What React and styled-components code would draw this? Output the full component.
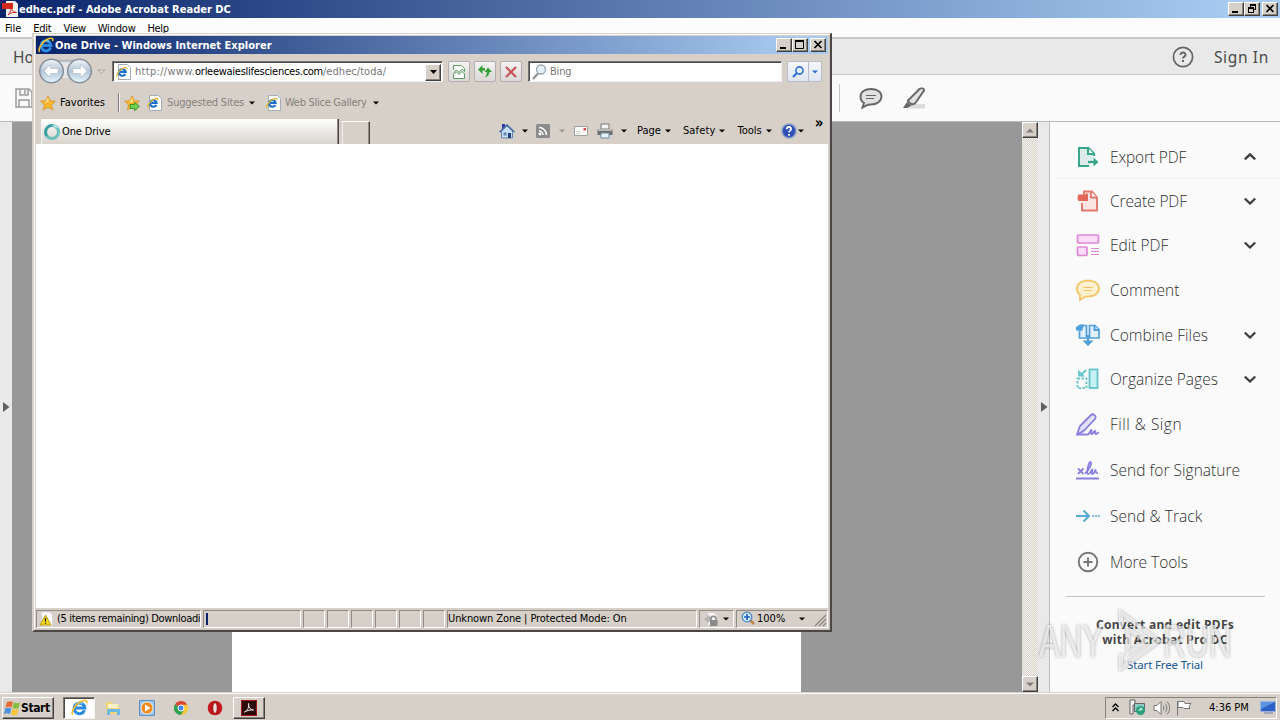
import React from "react";
import styled, { createGlobalStyle, css } from "styled-components";

const GlobalStyle = createGlobalStyle`
  * {
    box-sizing: border-box;
  }
  body {
    margin: 0;
    overflow: hidden;
    background-color: #989898;
    font-family: "DejaVu Sans Condensed", "DejaVu Sans", sans-serif;
    font-size: 11px;
    color: #000;
  }
  svg {
    display: block;
    flex: none;
  }
`;

const Desktop = styled.div`
  position: relative;
  width: 1280px;
  height: 720px;
  display: flex;
  flex-direction: column;
  overflow: hidden;
`;

const Label = styled.span`
  flex: none;
  white-space: nowrap;
  line-height: 14px;
  font-size: ${(p) => p.$size || 11}px;
  font-weight: ${(p) => (p.$bold ? 700 : 400)};
  color: ${(p) => p.$color || "#000"};
  letter-spacing: ${(p) => p.$ls || 0}px;
  margin-left: ${(p) => p.$ml || 0}px;
`;

const Slot = styled.span`
  display: flex;
  flex: none;
  margin-left: ${(p) => p.$ml || 0}px;
`;

const raised = css`
  background-color: #d6d0c8;
  border: 1px solid;
  border-color: #fff #404040 #404040 #fff;
  box-shadow: inset -1px -1px 0 #86827c;
`;

const sunken = css`
  background-color: #fff;
  border: 1px solid;
  border-color: #77736f #f4f2ee #f4f2ee #77736f;
  box-shadow: inset 1px 1px 0 #4c4a48;
`;

/* ---------- shared window parts ---------- */

const TitleBar = styled.div`
  display: flex;
  align-items: center;
  flex: none;
  height: 18px;
  padding: 0 2px;
  background: linear-gradient(90deg, #0a246a, #a6caf0 96%);

  ${Label} {
    padding-top: 1px;
  }
`;

const WinButton = styled.button`
  ${raised}
  width: 16px;
  height: 14px;
  padding: 0;
  flex: none;
  display: flex;
  align-items: center;
  justify-content: center;
  margin-left: ${(p) => p.$ml || 0}px;
`;

const Spacer = styled.div`
  flex: 1;
`;

const WinButtons = ({ restore }) => (
  <>
    <WinButton>
      <svg width="12" height="10">
        <path d="M2 7h6v2h-6z" />
      </svg>
    </WinButton>
    <WinButton>
      {restore ? (
        <svg width="12" height="10" fill="none" stroke="#000" shapeRendering="crispEdges">
          <path d="M4.500 3V.5h5v5H8M4 1.500h6M2.500 3.500h5v5h-5zM2 4.500h6" />
        </svg>
      ) : (
        <svg width="12" height="10" fill="none" stroke="#000" shapeRendering="crispEdges">
          <path d="M1.500.5h8v8h-8zM1 1.500h9" />
        </svg>
      )}
    </WinButton>
    <WinButton $ml={2}>
      <svg width="12" height="10" stroke="#000" strokeWidth="1.700">
        <path d="M2.500 1l7 7M9.500 1l-7 7" />
      </svg>
    </WinButton>
  </>
);

const Caret = ({ ml = 0, color = "#000" }) => (
  <Slot $ml={ml}>
    <svg width="6" height="4" fill={color}>
      <path d="M0 .5h6L3 3.500z" />
    </svg>
  </Slot>
);

const IeGlyph = ({ size = 16 }) => (
  <svg width={size} height={size} viewBox="0 0 16 16" fill="none">
    <path d="M12.700 10.600A5 5 0 1 1 13 8.500H4.500" stroke="#2a8be0" strokeWidth="2.900" />
    <path d="M3.500 6.500A5 5 0 0 1 11 4.500" stroke="#7cc8f6" strokeWidth="1.200" />
    <path d="M1.800 14.800C-.8 12.500 5 3.500 11 1.600c3-1 4.500 0 3.600 2.400" stroke="#f2bd2c" strokeWidth="1.600" />
  </svg>
);

const IePage = () => (
  <svg width="16" height="16" viewBox="0 0 16 16" fill="none">
    <path d="M2.500.5h9l3 3v12h-12z" fill="#fff" stroke="#a4adb8" />
    <path d="M9.300 9.900A3.300 3.300 0 1 1 9.600 8H4.300" stroke="#1b6fc9" strokeWidth="2.200" />
    <path d="M1.300 12.500C-.2 10.500 4 5 8.500 3.600c2-.5 2.600.2 2.300 1.500" stroke="#e5b62c" strokeWidth="1.300" />
  </svg>
);

/* ---------- Acrobat ---------- */

const AcroMenu = styled.div`
  display: flex;
  align-items: center;
  gap: 12px;
  height: 21px;
  flex: none;
  background-color: #fdfcfc;
  border-bottom: 2px solid #c9c9c9;
  padding: 2px 0 0 5px;
`;

const AcroTabs = styled.div`
  display: flex;
  align-items: center;
  height: 36px;
  flex: none;
  background-color: #e9e9e9;
  border-bottom: 1px solid #c6c6c6;
  padding: 0 11px 0 13px;
`;

const AcroText = styled.span`
  font-family: "Noto Sans", "Open Sans", sans-serif;
  font-size: 15.500px;
  color: #4a4a4a;
  line-height: 20px;
  letter-spacing: ${(p) => p.$ls || 0}px;
  margin-left: ${(p) => p.$ml || 0}px;
`;

const AcroTools = styled.div`
  display: flex;
  align-items: center;
  height: 47px;
  flex: none;
  background-color: #fafafa;
  border-bottom: 1px solid #b9b9b9;
  padding-left: 15px;
`;

const ToolDivider = styled.div`
  width: 1px;
  height: 28px;
  background-color: #c6c6c6;
  margin-left: 806px;
`;

const AcroBody = styled.div`
  display: flex;
  flex: 1;
  min-height: 0;
`;

const Gutter = styled.div`
  display: flex;
  align-items: center;
  flex: none;
  width: ${(p) => p.$w}px;
  padding-left: ${(p) => p.$pl}px;
  background-color: #e9e9e9;
`;

const DocArea = styled.div`
  flex: 1;
  display: flex;
  padding-left: 220px;
  background-color: #989898;
`;

const DocPage = styled.div`
  width: 569px;
  background-color: #fff;
`;

const ScrollTrack = styled.div`
  width: 16px;
  flex: none;
  display: flex;
  flex-direction: column;
  justify-content: space-between;
  background: repeating-conic-gradient(#d6d0c8 0% 25%, #f6f4f1 0% 50%) 0 0 / 2px 2px;
`;

const ScrollButton = styled.button`
  ${raised}
  width: 16px;
  height: 16px;
  padding: 0;
  display: flex;
  align-items: center;
  justify-content: center;
`;

const ToolsPanel = styled.div`
  width: 231px;
  flex: none;
  display: flex;
  flex-direction: column;
  background-color: #fafafa;
  border-left: 1px solid #bdbdbd;
  padding-top: 14px;
`;

const ToolRow = styled.div`
  display: flex;
  align-items: center;
  flex: none;
  height: ${(p) => p.$h}px;
  margin-left: 6px;
  padding: 0 24px 0 20px;
  border-bottom: ${(p) => (p.$line ? "1px solid #f0f0f0" : "none")};
`;

const ToolName = styled.span`
  flex: 1;
  margin-left: 10px;
  font-family: "Open Sans", "Noto Sans", sans-serif;
  font-weight: 300;
  font-size: 15.500px;
  white-space: nowrap;
  color: #303030;
  letter-spacing: ${(p) => p.$ls || 0}px;
`;

const PanelRule = styled.div`
  height: 1px;
  margin: 11px 15px 0 16px;
  flex: none;
  background-color: #c3c3c3;
`;

const Promo = styled.div`
  display: flex;
  flex-direction: column;
  align-items: center;
  margin-top: 20px;
  font-family: "Noto Sans", sans-serif;
  font-weight: 700;
  font-size: 12px;
  line-height: 15px;
  letter-spacing: 0.3px;
  color: #474747;
`;

const PromoLink = styled.a`
  margin-top: 10px;
  font-weight: 400;
  font-size: 11.500px;
  letter-spacing: -0.15px;
  color: #1b5893;
`;

const toolIcons = {
  export: (
    <svg width="24" height="24" fill="none" stroke="#35a88c" strokeWidth="2">
      <path d="M18 11V8.500L12.500 3H3v18h10" fill="#dcebe8" />
      <path d="M12 3v6h6" fill="#fff" />
      <path d="M12 17h7" strokeWidth="2.300" />
      <path d="M17.500 12.500l5 4.500-5 4.500z" fill="#35a88c" stroke="none" />
    </svg>
  ),
  create: (
    <svg width="24" height="24" fill="none" stroke="#e2786d" strokeWidth="1.900">
      <path d="M6 14v7.500h15V8.500l-5-6H8V6" fill="#fbe6e3" />
      <path d="M15 2.500v6h6" fill="#fff" />
      <path d="M3 5.500h7V4l2 1v7h-9c-2 0-2-6.500 0-6.500z" fill="#e2685b" stroke="none" />
    </svg>
  ),
  edit: (
    <svg width="24" height="24" fill="#f9dcf7" stroke="#df86d8" strokeWidth="1.700">
      <rect x="1.500" y="2" width="21" height="8" rx="1" />
      <rect x="1.500" y="14" width="9.500" height="8.500" rx="1" />
      <path d="M15 15.500h8M15 18.500h8M15 21.500h8" strokeWidth="1" />
    </svg>
  ),
  comment: (
    <svg width="24" height="24" fill="#fdf0cf" stroke="#f2c76b" strokeWidth="1.900">
      <path d="M12 2.500c6.500 0 11 3.500 11 8s-4.500 8-11 8l-3 .2L4 22v-5C2 15.500 1 13.500 1 10.500c0-4.500 4.500-8 11-8z" />
      <path d="M7 9.500h10M8 12.500h8" strokeWidth="1" />
    </svg>
  ),
  combine: (
    <svg width="24" height="24" fill="#e3f0fa" stroke="#4f9fdc" strokeWidth="1.700">
      <path d="M5 2.500h5.500V15H3.500V8" />
      <path d="M13.500 15V2.500h5.500l4 4V15z" />
      <path d="M18.500 2.500V7H23M12 12v8" strokeWidth="2" />
      <path d="M6.500 17.500h11L12 23z" fill="#4f9fdc" stroke="none" />
      <path d="M0 7.500V4l4-2.500h4L6 8z" fill="#4f9fdc" stroke="none" />
    </svg>
  ),
  organize: (
    <svg width="24" height="24" fill="none" stroke="#6ac5cc" strokeWidth="1.900">
      <rect x="13.500" y="2.500" width="8" height="18.500" fill="#c6f1f5" />
      <path d="M1.500 11.500h9v9.500h-9z" strokeDasharray="2.500 1.500" />
      <path d="M10 3L5 8" />
      <path d="M2 2.500v7h7z" fill="#6ac5cc" stroke="none" />
    </svg>
  ),
  fill: (
    <svg width="24" height="24" fill="none" stroke="#8a7fe0" strokeWidth="1.800">
      <path d="M1 22.500L4 14 15 3c2-2 6 1 4 4L9 17.500c-2 2-4 3.500-8 5z" fill="#e4e1fa" />
      <path d="M1 22.500h11c2.500-1.500 2.500-5 3.500-4.500s-1.500 4.500.5 4 2-3 3-3-.5 3 1 3l3-1.500" />
    </svg>
  ),
  signature: (
    <svg width="24" height="24" fill="none" stroke="#8a7fe0" strokeWidth="1.800">
      <path d="M0 20.500h23M2 10.500l5.500 5.500M7.500 10.500L2 16" />
      <path d="M9 15.500c4-3 7.500-11 5.500-11.500S10 15.500 12 16s4-5.500 4.500-4.500-2 4.500 0 4.500 2.500-4 3-4-.5 3.500 2.500 3" />
    </svg>
  ),
  track: (
    <svg width="24" height="24" fill="none" stroke="#56a8d6" strokeWidth="2">
      <path d="M0 12h13M7.500 6.500L13 12l-5.500 5.500" />
      <path d="M16 12h8" strokeDasharray="2 1" strokeWidth="1.300" />
    </svg>
  ),
  more: (
    <svg width="24" height="24" fill="none" stroke="#757575" strokeWidth="1.900">
      <circle cx="12" cy="12" r="9.300" />
      <path d="M12 7.500v9M7.500 12h9" />
    </svg>
  ),
};

const tools = [
  { icon: "export", name: "Export PDF", h: 43, ls: -0.15, chevron: "up", line: true },
  { icon: "create", name: "Create PDF", h: 44, ls: -0.1, chevron: "down" },
  { icon: "edit", name: "Edit PDF", h: 44, ls: 0, chevron: "down" },
  { icon: "comment", name: "Comment", h: 45, ls: 0.1 },
  { icon: "combine", name: "Combine Files", h: 45, ls: 0.05, chevron: "down" },
  { icon: "organize", name: "Organize Pages", h: 44, ls: 0.03, chevron: "down" },
  { icon: "fill", name: "Fill & Sign", h: 46, ls: 0.5 },
  { icon: "signature", name: "Send for Signature", h: 46, ls: 0.04 },
  { icon: "track", name: "Send & Track", h: 46, ls: 0.05 },
  { icon: "more", name: "More Tools", h: 46, ls: 0 },
];

const Chevron = ({ dir }) => (
  <svg width="12" height="8" fill="none" stroke="#3e3e3e" strokeWidth="2.300">
    <path d={dir === "up" ? "M.8 6.300L6 1.300l5.200 5" : "M.8 1.500L6 6.500l5.200-5"} />
  </svg>
);

const AcrobatWindow = () => (
  <>
    <TitleBar>
      <svg width="17" height="18">
        <path d="M4 1h9l3 3v13H4z" fill="#f4f1f1" />
        <path d="M0 3h11v6H0z" fill="#d3261c" />
        <path d="M6 15c2-2 3.500-5 3-8 1 4 3 5 5.500 5.500C11 12 8 13 6 15z" fill="none" stroke="#d3261c" />
      </svg>
      <Label $bold $color="#fff" $ls={0.02}>edhec.pdf - Adobe Acrobat Reader DC</Label>
      <Spacer />
      <WinButtons restore />
    </TitleBar>
    <AcroMenu>
      <Label $ls={-0.05}>File</Label>
      <Label $ls={-0.25}>Edit</Label>
      <Label $ls={-0.3}>View</Label>
      <Label $ls={-0.2}>Window</Label>
      <Label $ls={-0.4}>Help</Label>
    </AcroMenu>
    <AcroTabs>
      <AcroText>Home</AcroText>
      <Spacer />
      <svg width="22" height="22" fill="none" stroke="#666" strokeWidth="1.700">
        <circle cx="11" cy="11" r="9.600" />
        <path d="M8.500 9c0-3.500 5.200-3.300 5 0 0 1.500-2.500 1.700-2.500 3.500M11 14v2" strokeWidth="2" />
      </svg>
      <AcroText $ml={20} $ls={0.65}>Sign In</AcroText>
    </AcroTabs>
    <AcroTools>
      <svg width="18" height="20" fill="none" stroke="#9c9c9c" strokeWidth="1.500">
        <path d="M1 1h13l3 3v15H1zM5 1v6h8V1M4 19v-7h10v7M10 2v4" />
      </svg>
      <ToolDivider />
      <Slot $ml={19}>
        <svg width="24" height="24" fill="#e2e2e2" stroke="#666" strokeWidth="1.900">
          <path d="M12 3c6 0 10.500 3 10.500 7.500s-4.500 8-10.500 8l-3 .2-5.500 2.800 1.500-4.500C2.500 15.500 1.500 13.500 1.500 10.500 1.500 6 6 3 12 3z" />
          <path d="M7 9.500h10M7 12.500h8" strokeWidth="1.200" />
        </svg>
      </Slot>
      <Slot $ml={19}>
        <svg width="24" height="24" fill="#e2e2e2" stroke="#666" strokeWidth="1.900">
          <path d="M8 18h15v4.500H4z" stroke="none" fill="#dcdcdc" />
          <path d="M6 14.500L17.500 3c1-1 5-1 4.500 1.500L13 17.500l-3 1-4-3z" />
          <path d="M5 16l4.500 3.500L5 22H1z" fill="#666" stroke="none" />
        </svg>
      </Slot>
    </AcroTools>
    <AcroBody>
      <Gutter $w={12} $pl={3}>
        <svg width="7" height="11" fill="#606060">
          <path d="M0 0l6.500 5L0 10z" />
        </svg>
      </Gutter>
      <DocArea>
        <DocPage />
      </DocArea>
      <ScrollTrack>
        <ScrollButton>
          <svg width="8" height="5" fill="#808080">
            <path d="M0 4.500h8L4 .5z" />
          </svg>
        </ScrollButton>
        <ScrollButton>
          <svg width="8" height="5" fill="#808080">
            <path d="M0 .5h8L4 4.500z" />
          </svg>
        </ScrollButton>
      </ScrollTrack>
      <Gutter $w={11} $pl={3}>
        <svg width="7" height="11" fill="#606060">
          <path d="M0 0l6.500 5L0 10z" />
        </svg>
      </Gutter>
      <ToolsPanel>
        {tools.map((t) => (
          <ToolRow key={t.icon} $h={t.h} $line={t.line}>
            {toolIcons[t.icon]}
            <ToolName $ls={t.ls}>{t.name}</ToolName>
            {t.chevron && <Chevron dir={t.chevron} />}
          </ToolRow>
        ))}
        <PanelRule />
        <Promo>
          <span>Convert and edit PDFs</span>
          <span>with Acrobat Pro DC</span>
          <PromoLink>Start Free Trial</PromoLink>
        </Promo>
      </ToolsPanel>
    </AcroBody>
  </>
);

/* ---------- Internet Explorer ---------- */

const IeFrame = styled.div`
  position: absolute;
  left: 32px;
  top: 33px;
  width: 800px;
  height: 599px;
  display: flex;
  flex-direction: column;
  padding: 2px;
  background-color: #d6d0c8;
  border: 2px solid;
  border-color: #d6d0c8 #4a4744 #4a4744 #d6d0c8;
  border-top-width: 1px;
  box-shadow: inset 1px 1px 0 #fff, inset -1px -1px 0 #c9c4bc;
`;

const NavRow = styled.div`
  display: flex;
  align-items: center;
  height: 35px;
  flex: none;
  padding-left: 2px;
`;

const AddressBox = styled.div`
  ${sunken}
  display: flex;
  align-items: center;
  width: ${(p) => p.$w}px;
  height: 21px;
  flex: none;
  margin-left: ${(p) => p.$ml}px;
  padding: 1px 1px 0 3px;
`;

const DropButton = styled.button`
  ${raised}
  width: 16px;
  height: 17px;
  padding: 0 4px;
`;

const NavButton = styled.button`
  display: flex;
  align-items: center;
  justify-content: center;
  flex: none;
  width: 22px;
  height: 21px;
  padding: 0;
  margin-left: ${(p) => p.$ml}px;
  border: 1px solid #b1aeab;
  border-radius: 2px;
  background: linear-gradient(#f6f5f4, #e6e4e2 50%, #dcdad8);
`;

const SearchButtons = styled.div`
  display: flex;
  align-items: center;
  flex: none;
  width: 35px;
  height: 21px;
  margin-left: 5px;
  border: 1px solid #b9bcc4;
  border-radius: 2px;
  background: linear-gradient(#f5f7fb, #dfe6f2);
`;

const SearchMore = styled.div`
  display: flex;
  align-items: center;
  justify-content: center;
  width: 13px;
  height: 19px;
  margin-left: 4px;
  border-left: 1px solid #b9bcc4;
`;

const FavRow = styled.div`
  display: flex;
  align-items: center;
  height: 28px;
  flex: none;
  padding-left: 4px;
`;

const FavDivider = styled.div`
  width: 2px;
  height: 19px;
  margin: -2px 0 0 13px;
  border-left: 1px solid #807c77;
  border-right: 1px solid #f6f4f2;
`;

const TabRow = styled.div`
  display: flex;
  align-items: flex-end;
  height: 27px;
  flex: none;
  padding-left: 5px;
`;

const Tab = styled.div`
  display: flex;
  align-items: center;
  width: 298px;
  height: 25px;
  padding: 1px 0 0 2px;
  background: linear-gradient(#fff, #f3f2ef 30%, #d8d3cc);
  border-right: 1px solid #48443f;
  box-shadow: inset -1px 0 0 #8e8a84, inset 1px 0 0 #f5f4f2;
`;

const NewTab = styled.div`
  width: 28px;
  height: 23px;
  margin-left: 3px;
  border: 1px solid;
  border-width: 1px 1px 0;
  border-color: #fff #48443f #fff #f0eeeb;
  box-shadow: inset -1px 0 0 #8e8a84;
`;

const CommandBar = styled.div`
  display: flex;
  align-items: center;
  height: 27px;
  margin-left: 129px;
`;

const Overflow = styled.span`
  align-self: flex-start;
  margin: -2px 0 0 11px;
  font-size: 15px;
  font-weight: 700;
  line-height: 17px;
`;

const Viewport = styled.div`
  flex: 1;
  background-color: #fff;
`;

const StatusBar = styled.div`
  display: flex;
  align-items: center;
  height: 20px;
  flex: none;
  gap: 2px;
  padding-top: 1px;
`;

const StatusPane = styled.div`
  display: flex;
  align-items: center;
  overflow: hidden;
  flex: none;
  width: ${(p) => p.$w}px;
  height: 18px;
  padding-left: ${(p) => p.$pl || 0}px;
  border: 1px solid;
  border-color: #8f8b85 #fff #fff #8f8b85;

  ${Label} {
    padding-top: 1px;
  }
`;

const Progress = styled.div`
  width: 2px;
  height: 12px;
  background-color: #0a246a;
`;

const RoundArrow = ({ flip }) => (
  <g transform={flip ? "translate(55 0) scale(-1 1)" : undefined}>
    <circle cx="13.500" cy="13" r="11.800" fill="url(#nav)" stroke="#858f9b" strokeWidth="1.500" />
    <path d="M12.500 6.500L6 13l6.500 6.500V15.500H20v-5h-7.500z" fill="#fff" stroke="#b5c3d1" strokeWidth=".7" />
  </g>
);

const Star = ({ plus }) => (
  <svg width="16" height="16" viewBox="0 0 16 16">
    <path d="M8 .8l2.200 4.900 5.200.5-3.900 3.500 1.100 5.300L8 12.300 3.400 15l1.100-5.300L.6 6.200l5.200-.5z" fill="#f9b52c" stroke="#d9932a" strokeWidth=".8" />
    <path d="M8 2.500l1.200 4L5 8z" fill="#fde08a" />
    {plus && <path d="M6 9.500h4.500V7.300l5 4.200-5 4.200v-2.200H6z" fill="#6fd04b" stroke="#2f8a25" strokeWidth=".8" />}
  </svg>
);

const IeWindow = () => (
  <IeFrame>
    <TitleBar>
      <IeGlyph />
      <Label $bold $color="#fff" $ml={1} $ls={0.02}>One Drive - Windows Internet Explorer</Label>
      <Spacer />
      <WinButtons />
    </TitleBar>
    <NavRow>
      <svg width="55" height="27">
        <defs>
          <linearGradient id="nav" x1="0" y1="0" x2="0" y2="1">
            <stop offset="0" stopColor="#f3f6f9" />
            <stop offset=".5" stopColor="#b4c5d6" />
            <stop offset="1" stopColor="#e6f7fd" />
          </linearGradient>
        </defs>
        <path d="M10 1.500h35v3H10z" fill="#b9bec4" />
        <path d="M20 4h15v16H20z" fill="#e6e6e6" />
        <RoundArrow />
        <RoundArrow flip />
      </svg>
      <Slot $ml={4}>
        <svg width="9" height="6" fill="#dedad5" stroke="#aaa6a1">
          <path d="M1 1h7L4.500 4.500z" />
        </svg>
      </Slot>
      <AddressBox $w={331} $ml={6}>
        <IePage />
        <Label $ml={3} $color="#777" $ls={0.3}>http://www.</Label>
        <Label $ls={-0.27}>orleewaieslifesciences.com</Label>
        <Label $color="#777" $ls={0.05}>/edhec/toda/</Label>
        <Spacer />
        <DropButton>
          <svg width="7" height="4">
            <path d="M0 0h7L3.500 4z" />
          </svg>
        </DropButton>
      </AddressBox>
      <NavButton $ml={5}>
        <svg width="12" height="14" fill="#fff" stroke="#5d9d62">
          <path d="M.5 5V.5h8l3 3v3L9 4 6 7.500 3.500 5l-3 2.500M.5 9l3-2 2.500 2.500L9 6.500l2.500 2.500v4.500H.5z" />
        </svg>
      </NavButton>
      <NavButton $ml={4}>
        <svg width="14" height="13" fill="#35a035">
          <path d="M0 4.500L4.500 0v3H7v2.500H4.500V9zM14 7L10 2.500 6.500 7h2.300c0 3-.8 4-2.300 5.500 3-.5 5-2.500 5-5.500z" />
        </svg>
      </NavButton>
      <NavButton $ml={4}>
        <svg width="12" height="12" stroke="#c7525c" strokeWidth="2.200">
          <path d="M1 1l10 10M11 1L1 11" />
        </svg>
      </NavButton>
      <AddressBox $w={254} $ml={6}>
        <svg width="15" height="16" fill="none">
          <path d="M6 9.500L1 15" stroke="#8f8f8f" strokeWidth="2" />
          <circle cx="9" cy="5.500" r="4.500" fill="#e4f1fa" stroke="#9aa5af" strokeWidth="1.300" />
        </svg>
        <Label $ml={3} $color="#777" $ls={-0.2}>Bing</Label>
      </AddressBox>
      <SearchButtons>
        <Slot $ml={4}>
          <svg width="12" height="12" fill="none" stroke="#2e6fd2">
            <circle cx="7.500" cy="4.500" r="3.600" fill="#e6f1fc" strokeWidth="1.600" />
            <path d="M5 7L1 11" strokeWidth="2.200" />
          </svg>
        </Slot>
        <SearchMore>
          <Caret color="#2e6fd2" />
        </SearchMore>
      </SearchButtons>
    </NavRow>
    <FavRow>
      <Star />
      <Label $ml={4} $ls={0.05}>Favorites</Label>
      <FavDivider />
      <Slot $ml={4}>
        <Star plus />
      </Slot>
      <Slot $ml={7}>
        <IePage />
      </Slot>
      <Label $ml={4} $color="#86827d" $ls={-0.2}>Suggested Sites</Label>
      <Caret ml={5} />
      <Slot $ml={11}>
        <IePage />
      </Slot>
      <Label $ml={3} $color="#86827d" $ls={-0.28}>Web Slice Gallery</Label>
      <Caret ml={6} />
    </FavRow>
    <TabRow>
      <Tab>
        <svg width="18" height="18" fill="none">
          <circle cx="9" cy="9" r="6.500" stroke="#6fc0bd" strokeWidth="3.200" />
          <path d="M9 2.500A6.500 6.500 0 0 0 4 13" stroke="#3a9c9c" strokeWidth="2.400" />
          <path d="M11 2.800a6.500 6.500 0 0 1 3 2" stroke="#c9ecea" strokeWidth="1.500" />
        </svg>
        <Label $ml={1} $ls={-0.15}>One Drive</Label>
      </Tab>
      <NewTab />
      <CommandBar>
        <svg width="16" height="16">
          <path d="M3 1h3v5H3z" fill="#3038a8" />
          <path d="M2.500 8L8 3l5.500 5v7h-11z" fill="#c9ddf3" stroke="#6483ab" />
          <path d="M.5 9L8 2l7.500 7" fill="none" stroke="#4b6da3" strokeWidth="1.500" />
          <path d="M9 10h3v5H9z" fill="#1e3f7e" />
          <path d="M4.500 9.500h3v3h-3z" fill="#5e82b4" />
        </svg>
        <Caret ml={7} />
        <Slot $ml={8}>
          <svg width="14" height="14" fill="none" stroke="#fff" strokeWidth="1.500">
            <rect width="14" height="14" rx="1.500" fill="#8b8b8b" stroke="none" />
            <path d="M3 7a4 4 0 0 1 4 4M3 3.500A7.500 7.500 0 0 1 10.500 11" />
            <circle cx="4" cy="10" r=".7" />
          </svg>
        </Slot>
        <Caret ml={9} color="#99958f" />
        <Slot $ml={9}>
          <svg width="14" height="10">
            <path d="M.5.5h13v9H.5z" fill="#fbfafa" stroke="#a39f9c" />
            <path d="M9.500 2h2.500v2.500H9.500z" fill="#d04a50" />
            <path d="M2 5.500h5M2 7.500h4" stroke="#d5d2d0" />
          </svg>
        </Slot>
        <Slot $ml={9}>
          <svg width="16" height="16">
            <path d="M4 1h8v5H4z" fill="#f5f5f5" stroke="#777" />
            <path d="M.5 6h15v6H.5z" fill="#6d6d6d" />
            <path d="M1 6h14v2H1z" fill="#b8b8b8" />
            <path d="M4 10h8v5H4z" fill="#e7f3fb" stroke="#6c8ca1" />
          </svg>
        </Slot>
        <Caret ml={8} />
        <Label $ml={10}>Page</Label>
        <Caret ml={4} />
        <Label $ml={12} $ls={0.15}>Safety</Label>
        <Caret ml={4} />
        <Label $ml={12}>Tools</Label>
        <Caret ml={4} />
        <Slot $ml={9}>
          <svg width="16" height="16" fill="none">
            <circle cx="8" cy="8" r="7" fill="#2d51b5" stroke="#8f9dc4" strokeWidth="1.500" />
            <path d="M5.700 6.200C6 3 10.500 3.500 10 6.200 9.800 7.500 8 7.800 8 9.500M8 11v1.800" stroke="#fff" strokeWidth="1.800" />
          </svg>
        </Slot>
        <Caret ml={1} />
        <Overflow>»</Overflow>
      </CommandBar>
    </TabRow>
    <Viewport />
    <StatusBar>
      <StatusPane $w={165} $pl={2}>
        <svg width="16" height="16">
          <path d="M2.500 1h8l3 3v11h-11z" fill="#fff" stroke="#d5d5d5" />
          <path d="M6.500 4l5.500 10H1z" fill="#f8dc1f" stroke="#b69b12" />
          <path d="M6.500 7v3.500M6.500 11.500v1.300" stroke="#222" strokeWidth="1.300" />
        </svg>
        <Label $ml={2} $ls={-0.33}>(5 items remaining) Downloadi</Label>
      </StatusPane>
      <StatusPane $w={98} $pl={2}>
        <Progress />
      </StatusPane>
      {[0, 1, 2, 3, 4, 5].map((i) => (
        <StatusPane key={i} $w={22} />
      ))}
      <StatusPane $w={250}>
        <Label $ls={-0.1}>Unknown Zone | Protected Mode: On</Label>
      </StatusPane>
      <StatusPane $w={35} $pl={3}>
        <svg width="16" height="16" fill="none">
          <path d="M5 2h6l3 3v9H5z" fill="#f3f3f3" />
          <path d="M1 8l5-4 3 4-4 4z" fill="#b5b5b5" />
          <path d="M8 9V7.500c0-3 5-3 5 0V9" stroke="#8b8b8b" strokeWidth="1.500" />
          <path d="M7 9h7.500v6H7z" fill="#8b8b8b" />
        </svg>
        <Caret ml={4} />
      </StatusPane>
      <StatusPane $w={92} $pl={4}>
        <svg width="15" height="15" fill="none">
          <path d="M8 8l5 5" stroke="#b9874a" strokeWidth="2.500" />
          <circle cx="6" cy="6" r="4.800" fill="#d7ebfb" stroke="#4b86c8" strokeWidth="1.300" />
          <path d="M6 3v6M3 6h6" stroke="#1f62c0" strokeWidth="1.700" />
        </svg>
        <Label $ml={1}>100%</Label>
        <Caret ml={14} />
        <Spacer />
        <svg width="13" height="16" stroke="#88847e" strokeWidth="1.300">
          <path d="M1 15L12 4M5 15l7-7M9 15l3-3" />
        </svg>
      </StatusPane>
    </StatusBar>
  </IeFrame>
);

/* ---------- taskbar ---------- */

const Bar = styled.div`
  display: flex;
  align-items: center;
  height: 28px;
  flex: none;
  padding: 2px 3px 0 2px;
  background-color: #d6d0c8;
  border-top: 1px solid #d6d0c8;
  box-shadow: inset 0 1px 0 #fff;
`;

const StartButton = styled.button`
  ${raised}
  display: flex;
  align-items: center;
  flex: none;
  width: 52px;
  height: 22px;
  padding: 0 1px;
  font-family: inherit;
`;

const TaskButton = styled.div`
  display: flex;
  align-items: center;
  justify-content: center;
  width: 32px;
  height: 22px;
  margin-left: ${(p) => p.$ml || 0}px;
  ${(p) => p.$state === "active" && sunken}
  ${(p) => p.$state === "open" && raised}
`;

const Tray = styled.div`
  display: flex;
  align-items: center;
  width: 172px;
  height: 22px;
  padding-left: 6px;
  border: 1px solid;
  border-color: #86827c #fff #fff #86827c;
`;

const Taskbar = () => (
  <Bar>
    <StartButton>
      <svg width="17" height="16">
        <path d="M3 2c2-1 4-1 6 0L7.500 7.500c-2-1-4-1-6 0z" fill="#ea6a32" />
        <path d="M10 2.500c2 1 4 1 6 0L14.500 8c-2 1-4 1-6 0z" fill="#82bd3c" />
        <path d="M1.300 8.500c2-1 4-1 6 0L6 14c-2-1-4-1-6 0z" fill="#4b8fdd" />
        <path d="M8.300 9c2 1 4 1 6 0L13 14.500c-2 1-4 1-6 0z" fill="#f7c731" />
      </svg>
      <Label $bold $size={12} $ls={-0.4}>Start</Label>
    </StartButton>
    <TaskButton $ml={9} $state="active">
      <IeGlyph size={17} />
    </TaskButton>
    <TaskButton $ml={2}>
      <svg width="16" height="16">
        <path d="M1 2h6l1 2h6v10H1z" fill="#f0d77e" />
        <path d="M3 4h10v4H3z" fill="#fcf4c8" />
        <path d="M2 9h13v6h-3v-3H5v3H2z" fill="#6fb7e6" />
      </svg>
    </TaskButton>
    <TaskButton $ml={2}>
      <svg width="16" height="16">
        <path d="M.7.7h14.600v14.600H.7z" fill="#a9cff1" stroke="#477fbd" />
        <circle cx="8" cy="8" r="6" fill="#f08a1d" stroke="#fff" strokeWidth=".7" />
        <path d="M6 4.500L11.500 8 6 11.500z" fill="#fff" />
      </svg>
    </TaskButton>
    <TaskButton $ml={2}>
      <svg width="14" height="14" viewBox="0 0 14 14">
        <path d="M7 7L.9 3.500A7 7 0 0 1 13.100 3.500z" fill="#dc4436" />
        <path d="M7 7L.9 3.500A7 7 0 0 0 7 14l3-5z" fill="#2fa24f" />
        <path d="M7 3.700h6.200A7 7 0 0 1 7 14l3-5z" fill="#f6ca35" />
        <circle cx="7" cy="7" r="3" fill="#4583ea" stroke="#fff" />
      </svg>
    </TaskButton>
    <TaskButton $ml={2}>
      <svg width="16" height="16">
        <circle cx="8" cy="8" r="7.300" fill="#c4161c" />
        <ellipse cx="8" cy="8" rx="2.300" ry="5.500" fill="#f0dede" stroke="#8d0e13" />
      </svg>
    </TaskButton>
    <TaskButton $ml={2} $state="open">
      <svg width="16" height="16" fill="none">
        <path d="M0 0h16v16H0z" fill="#2d0a0c" />
        <path d="M.5.5h15v15H.5z" stroke="#a5161b" />
        <path d="M3.500 12c3-1.500 5-5 4-8.500-.5 3 2 6.500 5 6.500-3-.5-6 .5-9 2z" stroke="#eee" />
      </svg>
    </TaskButton>
    <Spacer />
    <Tray>
      <svg width="7" height="9" fill="none" stroke="#000" strokeWidth="1.300">
        <path d="M.5 4L3.500 1l3 3M.5 8l3-3 3 3" />
      </svg>
      <Slot $ml={10}>
        <svg width="17" height="17">
          <path d="M1 1h5v5H4v9H1z" fill="#f1f1f1" stroke="#666" />
          <path d="M5.500 4.500h10v8h-10z" fill="#8ccbc3" stroke="#666" />
          <circle cx="11.500" cy="11.500" r="4.500" fill="#2aa07c" />
          <path d="M9 12l3-4 2 3z" fill="#b4e6d2" />
        </svg>
      </Slot>
      <Slot $ml={7}>
        <svg width="17" height="16" fill="none" stroke="#777">
          <path d="M1 5.500h3l4-4v13l-4-4H1z" fill="#fff" />
          <path d="M10 5.500c1.200 1.500 1.200 3.500 0 5M12 3.500c2.500 3 2.500 6 0 9M14 1.500c3.500 4 3.500 9 0 13" />
        </svg>
      </Slot>
      <Slot $ml={6}>
        <svg width="17" height="16" fill="#fff" stroke="#777">
          <path d="M1.500 1v14.500M2 1.500h6l1 2h6l-2 3 1 2H8l-1-1H2z" />
        </svg>
      </Slot>
      <Label $ml={16}>4:36 PM</Label>
      <Slot $ml={11}>
        <svg width="17" height="15">
          <path d="M.5 1.500h15v10H.5z" fill="#2d62c4" stroke="#9cb4dd" />
          <path d="M1 2h14L1 9z" fill="#5b93e4" />
          <path d="M4 13h9" stroke="#8b9bb5" strokeWidth="1.500" />
        </svg>
      </Slot>
    </Tray>
  </Bar>
);

/* ---------- watermark ---------- */

const Watermark = styled.div`
  position: absolute;
  left: 1039px;
  top: 608px;
  display: flex;
  align-items: center;
  height: 66px;
  font-family: "Liberation Sans", Arial, sans-serif;
  font-size: 46px;
  line-height: 66px;
  color: rgba(255, 255, 255, 0.65);
  filter: drop-shadow(0 0 1.5px rgba(0, 0, 0, 0.5));
  pointer-events: none;
`;

const WatermarkText = styled.span`
  display: block;
  width: ${(p) => p.$w}px;
  transform: scaleX(${(p) => p.$scale});
  transform-origin: left;
`;

export default function App() {
  return (
    <Desktop>
      <GlobalStyle />
      <AcrobatWindow />
      <Taskbar />
      <IeWindow />
      <Watermark>
        <WatermarkText $w={68} $scale={0.68}>ANY</WatermarkText>
        <svg width="56" height="66" fill="none" stroke="rgba(255,255,255,.65)" strokeWidth="4">
          <path d="M14 20V5l38 28-38 27V46M21 21v24l18-12z" />
        </svg>
        <WatermarkText $w={72} $scale={0.69}>RUN</WatermarkText>
      </Watermark>
    </Desktop>
  );
}
